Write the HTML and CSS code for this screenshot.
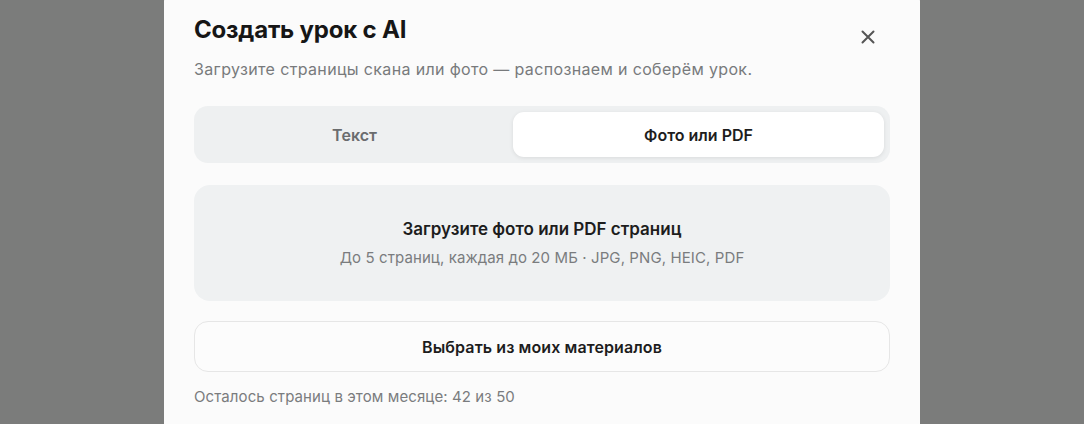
FILE: index.html
```html
<!DOCTYPE html>
<html lang="ru">
<head>
<meta charset="utf-8">
<title>Создать урок с AI</title>
<link rel="stylesheet" href="styles.css">
</head>
<body>
<div class="overlay">
  <div class="modal">
    <div class="modal-head">
      <div class="modal-titles">
        <h2 class="modal-title">Создать урок с AI</h2>
        <p class="modal-sub">Загрузите страницы скана или фото — распознаем и соберём урок.</p>
      </div>
      <button class="close-btn" aria-label="Закрыть">
        <svg width="16" height="16" viewBox="0 0 16 16"><path d="M2.5 2.5l11 11M13.5 2.5l-11 11" stroke="currentColor" stroke-width="2" stroke-linecap="round"/></svg>
      </button>
    </div>

    <div class="tabs">
      <button class="tab">Текст</button>
      <button class="tab tab-active">Фото или PDF</button>
    </div>

    <div class="dropzone">
      <div class="drop-title">Загрузите фото или PDF страниц</div>
      <div class="drop-hint">До 5 страниц, каждая до 20 МБ · JPG, PNG, HEIC, PDF</div>
    </div>

    <button class="pick-btn">Выбрать из моих материалов</button>

    <p class="quota">Осталось страниц в этом месяце: 42 из 50</p>
  </div>
</div>
</body>
</html>
```

FILE: styles.css
```css
* { box-sizing: border-box; }

html, body {
  margin: 0;
  height: 100%;
}

body {
  font-family: Inter, "Noto Sans", sans-serif;
  background: #7b7c7b;
  overflow: hidden;
}

.overlay {
  display: flex;
  justify-content: center;
  align-items: flex-start;
  height: 100%;
}

.modal {
  width: 756px;
  margin-top: -16px;
  background: #fbfbfb;
  border-radius: 18px 18px 0 0;
  padding: 30px 30px 17px;
  display: flex;
  flex-direction: column;
}

.modal-head {
  display: flex;
  justify-content: space-between;
  align-items: flex-start;
}

.modal-title {
  margin: 0;
  font-size: 24px;
  line-height: 32px;
  font-weight: 700;
  color: #161616;
  letter-spacing: -0.2px;
}

.modal-sub {
  margin: 11px 0 0;
  font-size: 16px;
  line-height: 24px;
  letter-spacing: 0.35px;
  color: #787a7c;
}

.close-btn {
  border: 0;
  background: none;
  padding: 0;
  margin: 15px 14px 0 0;
  color: #555;
  display: flex;
  cursor: pointer;
}

.tabs {
  margin-top: 25px;
  display: grid;
  grid-template-columns: 309px 1fr;
  gap: 4px;
  padding: 6px;
  background: #eef0f1;
  border-radius: 14px;
  height: 57px;
}

.tab {
  font-family: inherit;
  font-size: 16px;
  font-weight: 600;
  color: #6a6c6e;
  border: 0;
  background: none;
  border-radius: 11px;
  cursor: pointer;
}

.tab-active {
  background: #ffffff;
  color: #1d1d1d;
  box-shadow: 0 1px 4px rgba(0, 0, 0, 0.09);
}

.dropzone {
  margin-top: 22px;
  height: 116px;
  background: #eff1f2;
  border-radius: 16px;
  display: flex;
  flex-direction: column;
  align-items: center;
  justify-content: center;
  gap: 6px;
}

.drop-title {
  font-size: 17px;
  line-height: 24px;
  font-weight: 600;
  color: #1d1d1d;
}

.drop-hint {
  font-size: 15px;
  line-height: 22px;
  letter-spacing: 0.1px;
  color: #7a7c7e;
}

.pick-btn {
  margin-top: 20px;
  height: 51px;
  font-family: inherit;
  font-size: 16px;
  font-weight: 600;
  letter-spacing: 0.1px;
  color: #1d1d1d;
  background: #fcfcfc;
  border: 1px solid #e6e6e6;
  border-radius: 14px;
  cursor: pointer;
}

.quota {
  margin: 14px 0 0;
  font-size: 15px;
  line-height: 22px;
  letter-spacing: 0.1px;
  color: #7a7c7e;
}
```
